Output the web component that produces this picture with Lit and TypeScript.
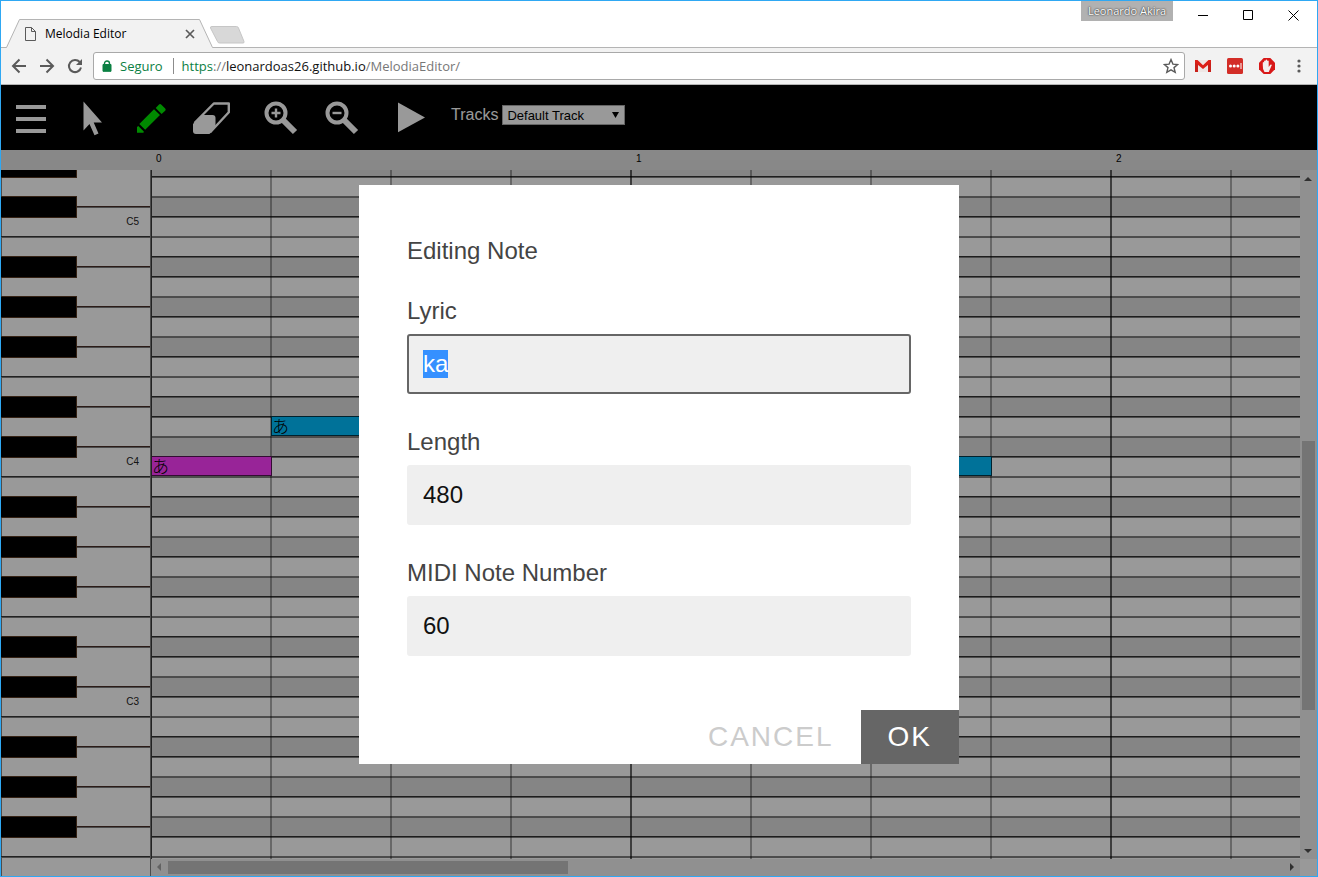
import { LitElement, html, svg, css } from "lit";
import { customElement, query, state } from "lit/decorators.js";
import { classMap } from "lit/directives/class-map.js";
import { styleMap } from "lit/directives/style-map.js";

/** Pitch classes from B down to C, in the order the piano roll stacks them. */
const OCTAVE = ["B", "A#", "A", "G#", "G", "F#", "F", "E", "D#", "D", "C#", "C"];
/** Rows whose upper edge is drawn with the darker rule. */
const STRONG_EDGE = ["A#", "A", "G", "F", "D#", "D", "C"];
const BEAT = 120;
const ROW = 20;
const TOP_INDEX = 8;

interface Pitch {
  name: string;
  octave: number;
  black: boolean;
}

interface Note {
  row: number;
  beat: number;
  beats: number;
  lyric: string;
  selected?: boolean;
}

const PITCHES: Pitch[] = Array.from({ length: 52 }, (_, i) => {
  const n = i + TOP_INDEX;
  const name = OCTAVE[n % 12];
  return { name, octave: 5 - Math.floor(n / 12), black: name.includes("#") };
});

const NOTES: Note[] = [
  { row: 15, beat: 0, beats: 1, lyric: "あ", selected: true },
  { row: 13, beat: 1, beats: 1, lyric: "あ" },
  { row: 15, beat: 6, beats: 1, lyric: "" },
];

@customElement("browser-chrome")
class BrowserChrome extends LitElement {
  static styles = css`
    :host {
      display: block;
      font-family: "Open Sans", "Noto Sans", sans-serif;
      background: #fff;
      color: #000;
    }
    button {
      border: 0;
      padding: 0;
      background: none;
      display: grid;
      place-items: center;
    }
    svg {
      display: block;
    }
    .strip {
      display: flex;
      height: 46px;
      border-bottom: 1px solid #b4b4b4;
    }
    .tab {
      display: grid;
      width: 208px;
      height: 29px;
      margin: 18px 0 0 4px;
    }
    .tab > * {
      grid-area: 1 / 1;
    }
    .tab-body {
      display: flex;
      align-items: center;
      padding: 0 18px 0 20px;
      font-size: 12px;
    }
    .tab-title {
      flex: 1;
      padding-left: 9px;
    }
    .new-tab {
      margin: 25px 0 0 -4px;
      height: 19px;
    }
    .window {
      display: flex;
      margin: 0 1px 0 auto;
      height: 29px;
    }
    .user {
      width: 92px;
      height: 20px;
      margin-right: 8px;
      line-height: 20px;
      text-align: center;
      font-size: 11px;
      color: #fff;
      background: #b1b1b1;
      text-shadow: 0 0 2px #333, 0 0 1px #333;
    }
    .window button {
      width: 45px;
    }
    .nav {
      display: flex;
      align-items: center;
      height: 36px;
      background: #f2f2f2;
      border-bottom: 1px solid #b4b4b4;
      padding: 0 2px 0 4px;
    }
    .nav > button {
      width: 28px;
      height: 28px;
    }
    .ext {
      display: flex;
      padding-left: 2px;
    }
    .ext button {
      width: 32px;
      height: 28px;
    }
    .address {
      display: flex;
      align-items: center;
      flex: 1;
      height: 26px;
      margin-left: 4px;
      background: #fff;
      border: 1px solid #a9a9a9;
      border-radius: 3px;
      font-size: 13px;
      padding-right: 5px;
    }
    .lock {
      width: 26px;
      display: grid;
      place-items: center;
    }
    .secure {
      color: #0b8043;
      padding-right: 10px;
      border-right: 1px solid #8c8c8c;
      line-height: 16px;
    }
    .url {
      flex: 1;
      padding-left: 8px;
      color: #777;
      text-decoration: none;
    }
    .url b {
      font-weight: 400;
      color: #111;
    }
    .url i {
      font-style: normal;
      color: #0b8043;
    }
  `;

  render() {
    return html`
      <div class="strip">
        <div class="tab">
          <svg width="208" height="29">
            <path d="M0 28.5h1.5L14.5.5h180L207.500 28.500V29H0z" fill="#f2f2f2" />
            <path d="M0 28.500h1.500L14.500.500h180L207.500 28.500" fill="none" stroke="#b4b4b4" />
          </svg>
          <div class="tab-body">
            <svg width="11" height="14" fill="none" stroke="#5a5a5a">
              <path d="M.5.500h6l4 4v9H.500zM6.500.500v4h4" />
            </svg>
            <span class="tab-title">Melodia Editor</span>
            <button aria-label="Close tab">
              <svg width="10" height="10" stroke="#5a5a5a" stroke-width="1.700"><path d="M1 1l8 8M9 1L1 9" /></svg>
            </button>
          </div>
        </div>
        <button class="new-tab" aria-label="New tab">
          <svg width="36" height="19">
            <path d="M3 .500h24.500q1.500 0 2 1.500L35 15.500q.500 1.500-1 1.500H10.500Q9 17 8.500 15.500L1.500 2Q1 .500 3 .500z" fill="#d8d8d8" stroke="#c6c6c6" />
          </svg>
        </button>
        <div class="window">
          <div class="user">Leonardo Akira</div>
          <button aria-label="Minimize"><svg width="11" height="11" stroke="#000"><path d="M0 5.500h10" /></svg></button>
          <button aria-label="Maximize">
            <svg width="11" height="11" fill="none" stroke="#000"><path d="M.500.500h9v9h-9z" /></svg>
          </button>
          <button aria-label="Close"><svg width="11" height="11" stroke="#000"><path d="M.500.500l10 10M10.500.500l-10 10" /></svg></button>
        </div>
      </div>
      <div class="nav">
        <button aria-label="Back">
          <svg width="16" height="16" fill="none" stroke="#5a5a5a" stroke-width="2"><path d="M15 8H2.500M8.500 1.500L2 8l6.500 6.500" /></svg>
        </button>
        <button aria-label="Forward">
          <svg width="16" height="16" fill="none" stroke="#5a5a5a" stroke-width="2"><path d="M1 8h12.500M7.500 1.500L14 8l-6.500 6.500" /></svg>
        </button>
        <button aria-label="Reload">
          <svg width="16" height="16"><path d="M12.700 4A6.100 6.100 0 1 0 14 9.500" fill="none" stroke="#5a5a5a" stroke-width="2" /><path d="M15 1v6H9z" fill="#5a5a5a" /></svg>
        </button>
        <div class="address">
          <span class="lock">
            <svg width="10" height="12"><path d="M2.500 5V3.500a2.500 2.500 0 0 1 5 0V5" fill="none" stroke="#0b8043" stroke-width="1.400" /><path d="M1 4.500h8v6.800H1z" fill="#0b8043" stroke="#0b8043" stroke-linejoin="round" /></svg>
          </span>
          <span class="secure">Seguro</span>
          <a class="url" href="https://leonardoas26.github.io/MelodiaEditor/"><i>https</i>://<b>leonardoas26.github.io</b>/MelodiaEditor/</a>
          <button aria-label="Bookmark">
            <svg width="16" height="16"><path d="M8 1.600l1.900 4.500 4.800.400-3.700 3.100 1.200 4.800L8 11.900l-4.200 2.500L5 9.600 1.300 6.500l4.800-.400z" fill="none" stroke="#5a5a5a" stroke-width="1.400" /></svg>
          </button>
        </div>
        <div class="ext">
          <button aria-label="Gmail">
            <svg width="16" height="12"><path d="M0 0h16v12H0z" fill="#eee6e4" /><path d="M1.500 12V1" stroke="#c8201a" stroke-width="3" /><path d="M14.500 12V1" stroke="#c8201a" stroke-width="3" /><path d="M0 0h2.500L8 5.200 13.500 0H16v2.500L8 9 0 2.500z" fill="#dd1f17" /></svg>
          </button>
          <button aria-label="Password manager">
            <svg width="16" height="16"><rect width="16" height="16" rx="1.500" fill="#d32d27" /><g fill="#fff"><circle cx="3.500" cy="8" r="1.500" /><circle cx="7.200" cy="8" r="1.500" /><circle cx="10.900" cy="8" r="1.500" /><path d="M13.500 5h1v6h-1z" /></g></svg>
          </button>
          <button aria-label="Ad blocker">
            <svg width="16" height="16"><path d="M4.700 0h6.600L16 4.700v6.600L11.300 16H4.700L0 11.300V4.700z" fill="#d81818" /><path d="M5.500 14Q3.500 11 3.800 7.500V4.500q.700-1 1.300 0V3q.800-1.200 1.500 0V2q.800-1.200 1.600 0v1q.900-1 1.500 0V9l1.600-2.200q1.300-.500 1.500.400l-2.300 5L9.800 14z" fill="#f3eeee" /></svg>
          </button>
          <button aria-label="Menu">
            <svg width="4" height="14" fill="#5a5a5a"><circle cx="2" cy="2" r="1.600" /><circle cx="2" cy="7" r="1.600" /><circle cx="2" cy="12" r="1.600" /></svg>
          </button>
        </div>
      </div>
    `;
  }
}

const TOOL_GROUPS = [
  [
    { label: "Menu", icon: svg`<path d="M15 20h30v4H15zM15 32h30v4H15zM15 44h30v4H15z" />` },
    { label: "Select", icon: svg`<path d="M22.500 16.500v29l6-6.500 5 11.200 4-1.800-4.800-10.900h8.300z" />` },
    {
      label: "Draw",
      active: true,
      icon: svg`<path d="M17.300 41L22.800 46.600 22.500 47.800H16V42zM18.300 39L33 24.300 39 30 24.200 44.700zM34.700 23L37.800 19.700Q39 18.500 40.400 19.700L44.200 23.400Q45.300 24.700 44.200 25.800L40.600 29z" />`,
    },
    {
      label: "Erase",
      icon: svg`<path d="M13.500 38L32.800 18.500H47.800V27.200L29 47.500" fill="none" stroke="#fff" stroke-width="2.400" stroke-linejoin="round" /><path d="M20.500 30H31.500Q34.500 30 34.500 33V42L28.500 49H15Q12 49 12 46V39z" />`,
    },
  ],
  [
    {
      label: "Zoom in",
      icon: svg`<circle cx="25" cy="28" r="9.500" fill="none" stroke="#fff" stroke-width="4" /><path d="M31 34l13 13" stroke="#fff" stroke-width="6" /><path d="M20.500 26.800h3.300v-3.300h2.400v3.300h3.300v2.400h-3.300v3.300h-2.400v-3.300h-3.300z" />`,
    },
    {
      label: "Zoom out",
      icon: svg`<circle cx="26" cy="28" r="9.500" fill="none" stroke="#fff" stroke-width="4" /><path d="M32 34l13 13" stroke="#fff" stroke-width="6" /><path d="M21.500 26.800h9v2.400h-9z" />`,
    },
  ],
  [{ label: "Play", icon: svg`<path d="M17 17.500l27 14.900-27 14.900z" />` }],
] as { label: string; icon: unknown; active?: boolean }[][];

@customElement("editor-toolbar")
class EditorToolbar extends LitElement {
  static styles = css`
    :host {
      display: flex;
      gap: 10px;
      height: 65px;
      background: #000;
      font-family: "Liberation Sans", Arial, sans-serif;
    }
    .group {
      display: flex;
    }
    .tool {
      width: 60px;
      height: 65px;
      padding: 0;
      border: 0;
      background: none;
      fill: #fff;
    }
    .active {
      fill: #00e600;
    }
    .tool svg {
      display: block;
    }
    .tracks {
      display: flex;
      align-items: center;
      gap: 4px;
      height: 20px;
      margin-top: 20px;
    }
    label {
      color: #fff;
      font-size: 16px;
      line-height: 20px;
    }
    .picker {
      display: grid;
      align-items: center;
      justify-items: end;
    }
    .picker > * {
      grid-area: 1 / 1;
    }
    select {
      appearance: none;
      width: 123px;
      height: 20px;
      padding: 0 4px;
      border: 1px solid #a9a9a9;
      border-radius: 0;
      background: #fff;
      color: #000;
      font: 13px "Liberation Sans", Arial, sans-serif;
    }
    .caret {
      margin-right: 6px;
      pointer-events: none;
    }
  `;

  render() {
    return html`
      ${TOOL_GROUPS.map(
        (group) => html`<div class="group">
          ${group.map(
            (t) => html`<button class=${classMap({ tool: true, active: !!t.active })} aria-label=${t.label}>
              <svg width="60" height="65">${t.icon}</svg>
            </button>`,
          )}
        </div>`,
      )}
      <div class="tracks">
        <label for="track">Tracks</label>
        <span class="picker">
          <select id="track"><option>Default Track</option></select>
          <svg class="caret" width="7" height="8"><path d="M0 1h7L3.500 7z" /></svg>
        </span>
      </div>
    `;
  }
}

@customElement("piano-roll")
class PianoRoll extends LitElement {
  static styles = css`
    :host {
      display: grid;
      grid-template: 20px minmax(0, 1fr) 17px / 150px minmax(0, 1fr) 17px;
      overflow: hidden;
      background: #fff;
      color: #000;
      font-family: "Liberation Sans", Arial, sans-serif;
    }
    .ruler {
      grid-column: 1 / -1;
      display: flex;
      overflow: hidden;
      padding-left: 150px;
      background: #e3e3e3;
      font-size: 10px;
      line-height: 18px;
    }
    .measure {
      flex: none;
      width: 475px;
      padding-left: 5px;
    }
    .keys {
      grid-row: 2 / -1;
      overflow: hidden;
      border-right: 1px solid #7f7f7f;
      box-shadow: inset 1px 0 #7f7f7f;
    }
    .stack {
      margin-top: -14px;
    }
    .key {
      box-sizing: border-box;
      display: grid;
      grid-template-columns: 76px 1fr;
      height: 20px;
    }
    .key.first {
      border-top: 1px solid #3a3a3a;
      box-shadow: inset 0 1px #7f7f7f;
    }
    .ebony {
      position: relative;
      box-sizing: border-box;
      height: 22px;
      background: #000;
      border: solid #593a22;
      border-width: 1px 1px 1px 0;
    }
    .seam {
      height: 8px;
      margin-top: 10px;
      border-top: 1px solid #4a3028;
      box-shadow: inset 0 1px #7f7f7f;
    }
    .name {
      grid-column: 2;
      padding-right: 11px;
      text-align: right;
      font-size: 10px;
      line-height: 12px;
      color: #222;
    }
    .lanes {
      position: relative;
      overflow: hidden;
      border-left: 1px solid #393939;
    }
    .lane {
      box-sizing: border-box;
      height: 20px;
      border-top: 1px solid #7f7f7f;
      box-shadow: inset 0 1px #7f7f7f;
    }
    .lane.strong {
      border-top-color: #333;
    }
    .lane.dark {
      background: #dedede;
    }
    .beats {
      position: absolute;
      inset: 0;
      background:
        repeating-linear-gradient(90deg, transparent 0 478px, rgba(0, 0, 0, 0.4) 478px 480px),
        repeating-linear-gradient(90deg, transparent 0 118px, rgba(0, 0, 0, 0.32) 118px 120px);
    }
    .note {
      position: absolute;
      box-sizing: border-box;
      height: 20px;
      border: 1px solid #00394d;
      background: #00bfff;
      font-family: "Noto Sans CJK JP", sans-serif;
      font-weight: 300;
      font-size: 17px;
      line-height: 17px;
    }
    .note.selected {
      background: #fd3dfd;
      border-color: #551455;
    }
    .bar {
      display: flex;
      background: #f1f1f1;
    }
    .vertical {
      flex-direction: column;
    }
    .arrow {
      width: 17px;
      height: 17px;
      flex: none;
      fill: #505050;
    }
    .arrow.idle {
      fill: #a3a3a3;
    }
    .thumb {
      background: #c1c1c1;
      margin: 0 2px;
    }
    .horizontal .thumb {
      margin: 2px 0;
    }
  `;

  private renderKey(p: Pitch) {
    const first = p.name === "B" || p.name === "E";
    return html`<div class=${classMap({ key: true, first })}>
      ${p.black ? html`<span class="ebony"></span><span class="seam"></span>` : null}
      ${p.name === "C" && p.octave > 2 ? html`<span class="name">C${p.octave}</span>` : null}
    </div>`;
  }

  private renderBar(kind: string, before: number, thumb: number, after: number, atStart: boolean) {
    const vertical = kind === "vertical";
    const start = vertical ? "M4 11h8L8 7z" : "M10 4v8L6 8z";
    const end = vertical ? "M4 7h8l-4 4z" : "M7 4v8l4-4z";
    return html`<div class="bar ${kind}">
      <svg class=${classMap({ arrow: true, idle: atStart })}><path d=${start} /></svg>
      <span style=${styleMap({ flexGrow: String(before) })}></span>
      <span class="thumb" style=${styleMap({ flexGrow: String(thumb) })}></span>
      <span style=${styleMap({ flexGrow: String(after) })}></span>
      <svg class="arrow"><path d=${end} /></svg>
    </div>`;
  }

  render() {
    return html`
      <div class="ruler">${[0, 1, 2].map((m) => html`<span class="measure">${m}</span>`)}</div>
      <div class="keys"><div class="stack">${PITCHES.map((p) => this.renderKey(p))}</div></div>
      <div class="lanes">
        <div class="stack">
          ${PITCHES.map(
            (p) => html`<div class=${classMap({ lane: true, dark: p.black, strong: STRONG_EDGE.includes(p.name) })}></div>`,
          )}
        </div>
        <div class="beats"></div>
        ${NOTES.map(
          (n) => html`<div
            class=${classMap({ note: true, selected: !!n.selected })}
            style=${styleMap({
              left: `${n.beat * BEAT - 1}px`,
              top: `${n.row * ROW - 14}px`,
              width: `${n.beats * BEAT + 1}px`,
            })}
          >${n.lyric}</div>`,
        )}
      </div>
      ${this.renderBar("vertical", 254, 269, 132, false)}
      ${this.renderBar("horizontal", 0, 400, 715, true)}
    `;
  }
}

@customElement("note-dialog")
class NoteDialog extends LitElement {
  @query("#lyric") private lyricField!: HTMLInputElement;
  @state() private fields = [
    { id: "lyric", label: "Lyric", value: "ka" },
    { id: "length", label: "Length", value: "480" },
    { id: "midi", label: "MIDI Note Number", value: "60" },
  ];

  static styles = css`
    :host {
      display: block;
      font-family: "Liberation Sans", Arial, sans-serif;
      font-size: 24px;
      color: #444;
    }
    form {
      background: #fff;
    }
    .body {
      padding: 48px 48px 24px;
    }
    h1 {
      margin: 0 0 24px;
      font-size: 24px;
      font-weight: 400;
      line-height: 36px;
    }
    .field {
      display: flex;
      flex-direction: column;
      gap: 5px;
      margin-bottom: 30px;
    }
    label {
      line-height: 36px;
    }
    input {
      box-sizing: border-box;
      width: 100%;
      height: 60px;
      padding: 0 14px;
      border: 2px solid #efefef;
      border-radius: 3px;
      background: #efefef;
      color: #111;
      font: inherit;
      outline: none;
    }
    input:focus {
      border-color: #666;
    }
    input::selection {
      background: rgba(51, 143, 255, 0.99);
      color: #fff;
    }
    .actions {
      display: flex;
      justify-content: flex-end;
    }
    button {
      height: 54px;
      padding: 0 27px;
      border: 0;
      background: none;
      color: #ccc;
      font: inherit;
      font-size: 28px;
      letter-spacing: 2px;
      text-transform: uppercase;
    }
    .ok {
      background: #666;
      color: #fff;
    }
  `;

  firstUpdated() {
    this.lyricField.focus();
    this.lyricField.select();
  }

  render() {
    return html`
      <form role="dialog" aria-labelledby="title" @submit=${(e: Event) => e.preventDefault()}>
        <div class="body">
          <h1 id="title">Editing Note</h1>
          ${this.fields.map(
            (f) => html`<div class="field">
              <label for=${f.id}>${f.label}</label>
              <input id=${f.id} type="text" autocomplete="off" .value=${f.value} />
            </div>`,
          )}
        </div>
        <div class="actions">
          <button type="button">Cancel</button>
          <button type="submit" class="ok">OK</button>
        </div>
      </form>
    `;
  }
}

@customElement("app-root")
class AppRoot extends LitElement {
  static styles = css`
    :host {
      box-sizing: border-box;
      display: flex;
      flex-direction: column;
      height: 100vh;
      overflow: hidden;
      border: 1px solid #2fa8f3;
    }
    .page {
      position: relative;
      flex: 1;
      min-height: 0;
      display: flex;
      flex-direction: column;
    }
    piano-roll {
      flex: 1;
      min-height: 0;
    }
    .overlay {
      position: absolute;
      inset: 0;
      display: flex;
      align-items: center;
      justify-content: center;
      padding-bottom: 12px;
      background: rgba(0, 0, 0, 0.4);
    }
    note-dialog {
      width: 600px;
      max-width: 100%;
    }
  `;

  render() {
    return html`
      <browser-chrome></browser-chrome>
      <main class="page">
        <editor-toolbar></editor-toolbar>
        <piano-roll></piano-roll>
        <div class="overlay"><note-dialog></note-dialog></div>
      </main>
    `;
  }
}
